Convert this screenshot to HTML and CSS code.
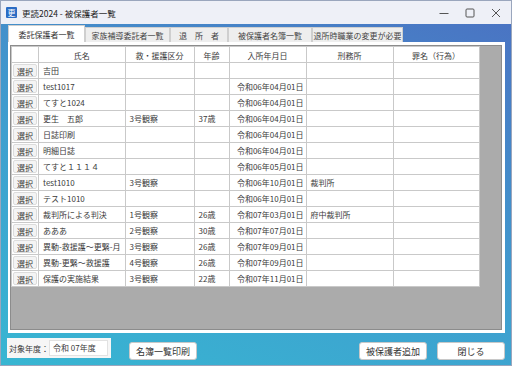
FILE: index.html
```html
<!DOCTYPE html>
<html lang="ja">
<head>
    <meta charset="UTF-8">
    <title>更読2024 - 被保護者一覧</title>
    <link rel="stylesheet" href="styles.css">
</head>
<body>
    <div class="window">
        <div class="titlebar">
            <span class="app-icon">更</span>
            <span class="title">更読2024 - 被保護者一覧</span>
            <div class="controls">
                <svg width="10" height="10" viewBox="0 0 10 10"><path d="M0.5 5.5h9" stroke="#555" stroke-width="1"/></svg>
                <svg width="10" height="10" viewBox="0 0 10 10"><rect x="1" y="1" width="8" height="8" rx="1" fill="none" stroke="#555" stroke-width="1"/></svg>
                <svg width="10" height="10" viewBox="0 0 10 10"><path d="M1 1l8 8M9 1l-8 8" stroke="#555" stroke-width="1"/></svg>
            </div>
        </div>

        <div class="main">
            <div class="tabs">
                <div class="tab active t1">委託保護者一覧</div>
                <div class="tab t2">家族補導委託者一覧</div>
                <div class="tab t3">退　所　者</div>
                <div class="tab t4">被保護者名簿一覧</div>
                <div class="tab t5">退所時職業の変更が必要</div>
            </div>

            <div class="panel">
                <div class="grid">
                    <table>
                        <thead>
                            <tr>
                                <th class="c-btn"></th>
                                <th class="c-name">氏名</th>
                                <th class="c-kind">救・援護区分</th>
                                <th class="c-age">年齢</th>
                                <th class="c-date">入所年月日</th>
                                <th class="c-prison">刑務所</th>
                                <th class="c-crime">罪名（行為）</th>
                            </tr>
                        </thead>
                        <tbody id="rows"></tbody>
                    </table>
                </div>
            </div>

            <div class="footer">
                <div class="year-box">
                    <span class="year-label">対象年度：</span>
                    <span class="year-input">令和 07年度</span>
                </div>
                <button class="btn print">名簿一覧印刷</button>
                <div class="spacer"></div>
                <button class="btn add">被保護者追加</button>
                <button class="btn close">閉じる</button>
            </div>
        </div>
    </div>

    <script>
        // name, kind, age, date, prison
        const people = [
            ["吉田", "", "", "", ""],
            ["test1017", "", "", "令和06年04月01日", ""],
            ["てすと1024", "", "", "令和06年04月01日", ""],
            ["更生　五郎", "3号観察", "37歳", "令和06年04月01日", ""],
            ["日誌印刷", "", "", "令和06年04月01日", ""],
            ["明細日誌", "", "", "令和06年04月01日", ""],
            ["てすと１１１４", "", "", "令和06年05月01日", ""],
            ["test1010", "3号観察", "", "令和06年10月01日", "裁判所"],
            ["テスト1010", "", "", "令和06年10月01日", ""],
            ["裁判所による判決", "1号観察", "26歳", "令和07年03月01日", "府中裁判所"],
            ["あああ", "2号観察", "30歳", "令和07年07月01日", ""],
            ["異動-救援護～更緊-月", "3号観察", "26歳", "令和07年09月01日", ""],
            ["異動-更緊～救援護", "4号観察", "26歳", "令和07年09月01日", ""],
            ["保護の実施結果", "3号観察", "22歳", "令和07年11月01日", ""]
        ];

        const tbody = document.getElementById('rows');
        people.forEach(p => {
            const tr = document.createElement('tr');
            tr.innerHTML =
                '<td class="c-btn"><span class="pick">選択</span></td>' +
                '<td>' + p[0] + '</td>' +
                '<td>' + p[1] + '</td>' +
                '<td>' + p[2] + '</td>' +
                '<td class="right">' + p[3] + '</td>' +
                '<td>' + p[4] + '</td>' +
                '<td></td>';
            tbody.appendChild(tr);
        });
    </script>
</body>
</html>
```

FILE: styles.css
```css
body {
    margin: 0;
    padding: 0;
    font-family: 'Noto Sans CJK JP', 'Noto Sans', sans-serif;
    color: #3a3a3a;
}

.window {
    width: 512px;
    height: 366px;
    display: flex;
    flex-direction: column;
    overflow: hidden;
    box-sizing: border-box;
    border: 1px solid #9aa6bd;
}

.titlebar {
    height: 23px;
    flex: none;
    display: flex;
    align-items: center;
    background: #eef0f7;
    padding-left: 5px;
}

.app-icon {
    width: 11px;
    height: 11px;
    background: #2b6cc4;
    color: white;
    font-size: 8px;
    line-height: 11px;
    text-align: center;
    border-radius: 1px;
    margin-right: 5px;
}

.title {
    font-size: 8.5px;
    color: #222;
}

.controls {
    margin-left: auto;
    display: flex;
    gap: 16px;
    padding-right: 10px;
}

.main {
    flex: 1;
    display: flex;
    flex-direction: column;
    background: linear-gradient(20deg, #37b6d2 0%, #3f9fcf 45%, #4a74c3 100%);
    padding: 1px 6px 0 7px;
}

.tabs {
    display: flex;
    height: 17px;
    align-items: flex-end;
}

.tab {
    height: 15px;
    font-size: 8px;
    line-height: 15px;
    text-align: center;
    background: #eeeeee;
    border: 1px solid #cfcfcf;
    border-bottom: none;
    box-sizing: border-box;
    color: #444;
}

.tab.active {
    height: 17px;
    line-height: 17px;
    background: #ffffff;
    color: #333;
}

.t1 { width: 77px; }
.t2 { width: 85px; }
.t3 { width: 58px; }
.t4 { width: 84px; }
.t5 { width: 91px; }

.panel {
    height: 291px;
    background: #ffffff;
    padding: 3px 3px 3px 2px;
    box-sizing: border-box;
}

.grid {
    height: 100%;
    background: #ababab;
    border: 1px solid #8c8c8c;
    box-sizing: border-box;
    overflow: hidden;
}

table {
    border-collapse: collapse;
    table-layout: fixed;
    font-size: 8px;
    background: #ffffff;
}

th, td {
    height: 16px;
    border: 1px solid #c9c9c9;
    padding: 0 4px;
    white-space: nowrap;
    overflow: hidden;
    box-sizing: border-box;
}

th {
    font-weight: normal;
    text-align: center;
    padding-top: 1px;
}

td.right {
    text-align: right;
    padding-right: 2px;
}

.c-btn { width: 27px; padding: 0; }
.c-name { width: 86px; }
.c-kind { width: 69px; }
.c-age { width: 35px; }
.c-date { width: 77px; }
.c-prison { width: 87px; }
.c-crime { width: 86px; }

.pick {
    display: block;
    margin: 1px;
    height: 13px;
    line-height: 13px;
    text-align: center;
    background: #f4f4f4;
    border: 1px solid #dcdcdc;
    border-radius: 2px;
    box-sizing: border-box;
    font-size: 8px;
}

.footer {
    flex: 1;
    display: flex;
    align-items: flex-start;
    padding-top: 5px;
}

.year-box {
    display: flex;
    align-items: center;
    background: #f6f6f6;
    padding: 2px 3px 2px 2px;
    width: 99px;
    height: 16px;
    margin-left: -1px;
}

.year-label {
    font-size: 8px;
    width: 40px;
}

.year-input {
    flex: 1;
    background: #ffffff;
    border: 1px solid #e2e2e2;
    height: 14px;
    line-height: 14px;
    font-size: 8px;
    padding-left: 3px;
}

.btn {
    font-family: inherit;
    font-size: 9px;
    height: 18px;
    width: 68px;
    margin-top: 4px;
    background: #ffffff;
    border: 1px solid #c8c8c8;
    border-radius: 3px;
    color: #333;
    padding: 0;
}

.btn.print {
    margin-left: 18px;
}

.btn.close {
    margin-left: 10px;
}

.spacer {
    flex: 1;
}
```
